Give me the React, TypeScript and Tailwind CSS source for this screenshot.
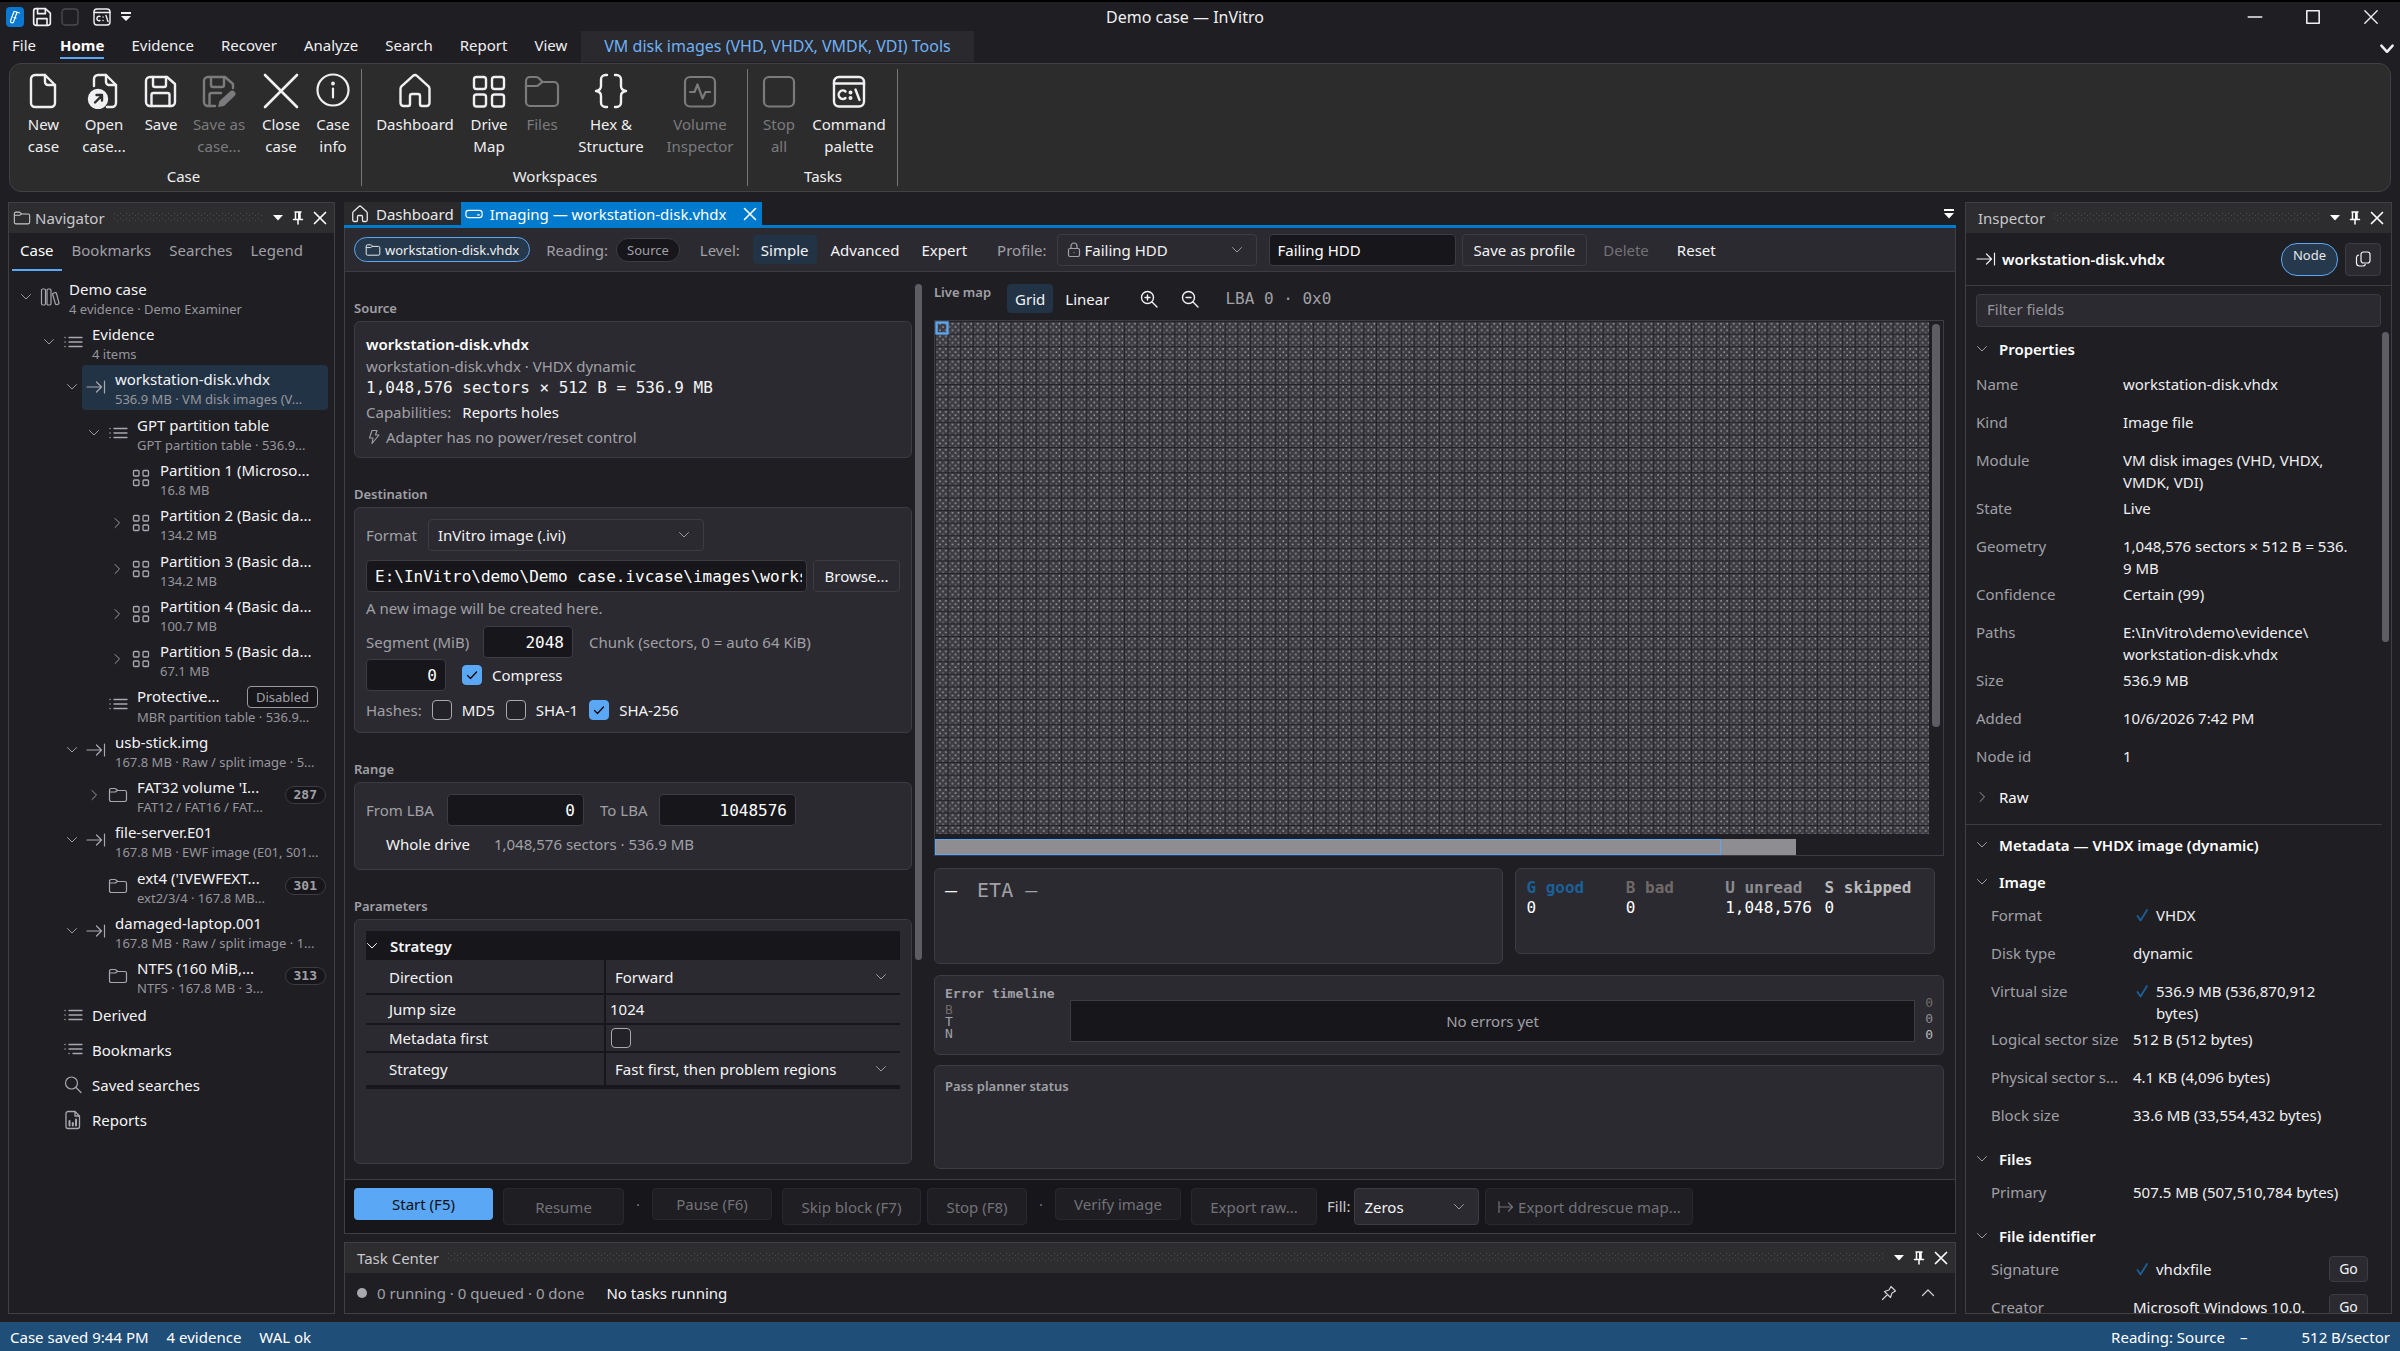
import { useState } from 'react';
import type { ReactNode } from 'react';
import clsx from 'clsx';

const MONO = "font-['DejaVu_Sans_Mono',monospace]";

type SvgProps = { children: ReactNode; box?: number; width?: number; className?: string };

function Svg({ children, box = 20, width = 1.3, className = 'h-5 w-5' }: SvgProps) {
  return (
    <svg
      viewBox={`0 0 ${box} ${box}`}
      fill="none"
      stroke="currentColor"
      strokeWidth={width}
      strokeLinecap="round"
      strokeLinejoin="round"
      className={clsx('shrink-0', className)}
      aria-hidden="true"
    >
      {children}
    </svg>
  );
}

const big = 'h-9 w-9';

const homePath =
  'M16 2.800a3 3 0 0 1 4 0l11 10a4 4 0 0 1 1.500 3V30a3 3 0 0 1-3 3H25a2 2 0 0 1-2-2v-8a2 2 0 0 0-2-2h-6a2 2 0 0 0-2 2v8a2 2 0 0 1-2 2H6.500a3 3 0 0 1-3-3V15.800a4 4 0 0 1 1.500-3z';

const ribbonIcons: Record<string, ReactNode> = {
  new: (
    <Svg box={36} width={2.4} className={big}>
      <path d="M9 2h10l10 10v18a4 4 0 0 1-4 4H9a4 4 0 0 1-4-4V6a4 4 0 0 1 4-4z" />
      <path d="M19 2v7a3 3 0 0 0 3 3h7" />
    </Svg>
  ),
  open: (
    <Svg box={36} width={2.4} className={big}>
      <path d="M8 13V6a4 4 0 0 1 4-4h8l10 10v18a4 4 0 0 1-4 4h-5" />
      <path d="M20 2v7a3 3 0 0 0 3 3h7" />
      <circle cx="12" cy="26" r="9" fill="currentColor" />
      <path d="M9 29.500l7-7M10.500 22H16v5.500" stroke="#2c2c2c" />
    </Svg>
  ),
  save: (
    <Svg box={36} width={2.4} className={big}>
      <path d="M7 4h17l8 7v18a4 4 0 0 1-4 4H7a4 4 0 0 1-4-4V8a4 4 0 0 1 4-4z" />
      <path d="M10 4v8a2 2 0 0 0 2 2h9a2 2 0 0 0 2-2V4M8.500 33V22a2 2 0 0 1 2-2h14a2 2 0 0 1 2 2v11" />
    </Svg>
  ),
  saveAs: (
    <Svg box={36} width={2.4} className={big}>
      <path d="M14 33H7a4 4 0 0 1-4-4V8a4 4 0 0 1 4-4h17l8 7v4" />
      <path d="M10 4v8a2 2 0 0 0 2 2h9a2 2 0 0 0 2-2V4M8.500 33V22a2 2 0 0 1 2-2H20" />
      <path d="M17 34l1.500-6L29 18.500a3 3 0 0 1 4.500 4.500L23 33z" fill="currentColor" stroke="none" />
    </Svg>
  ),
  close: (
    <Svg box={36} width={2.6} className={big}>
      <path d="M2 2l32 32M34 2L2 34" />
    </Svg>
  ),
  info: (
    <Svg box={36} width={2.2} className={big}>
      <circle cx="18" cy="17" r="15.500" />
      <path d="M18 15.500v9" />
      <circle cx="18" cy="10.500" r=".8" fill="currentColor" />
    </Svg>
  ),
  home: (
    <Svg box={36} width={2.4} className={big}>
      <path d={homePath} />
    </Svg>
  ),
  grid: (
    <Svg box={36} width={2.4} className={big}>
      <rect x="3" y="4" width="12" height="12" rx="2.500" />
      <rect x="21" y="4" width="12" height="12" rx="2.500" />
      <rect x="3" y="21.500" width="12" height="12" rx="2.500" />
      <rect x="21" y="21.500" width="12" height="12" rx="2.500" />
    </Svg>
  ),
  files: (
    <Svg box={36} width={2.2} className={big}>
      <path d="M2 13V8a4 4 0 0 1 4-4h6a4 4 0 0 1 3 1.300L18.500 9H30a4 4 0 0 1 4 4v16a4 4 0 0 1-4 4H6a4 4 0 0 1-4-4V13h10a4 4 0 0 0 3-1.300L18.500 9" />
    </Svg>
  ),
  hex: (
    <Svg box={36} width={2.4} className={big}>
      <path d="M14 2h-1.500A4.500 4.500 0 0 0 8 6.500V13c0 3-1.500 4.500-5 5 3.500.5 5 2 5 5v6.500a4.500 4.500 0 0 0 4.500 4.500H14M22 2h1.500A4.500 4.500 0 0 1 28 6.500V13c0 3 1.500 4.500 5 5-3.500.5-5 2-5 5v6.500a4.500 4.500 0 0 1-4.500 4.500H22" />
    </Svg>
  ),
  volume: (
    <Svg box={36} width={2.2} className={big}>
      <rect x="3" y="4" width="30" height="29.500" rx="5" />
      <path d="M8 19h4.500l3-7.500 5 14 3-6.500H28" />
    </Svg>
  ),
  stop: (
    <Svg box={36} width={2.2} className={big}>
      <rect x="3" y="4" width="30" height="29.500" rx="5" />
    </Svg>
  ),
  command: (
    <Svg box={36} width={2.4} className={big}>
      <rect x="3" y="4" width="30" height="29.500" rx="5" />
      <path d="M3 10.500h30" />
      <path d="M14.500 18.500a4.200 4.200 0 1 0 0 6.500M24.500 16.500l4 10.500" />
      <circle cx="19.500" cy="19.500" r=".8" fill="currentColor" />
      <circle cx="19.500" cy="25" r=".8" fill="currentColor" />
    </Svg>
  ),
};

const ChevronDown = ({ className = 'h-3 w-3' }: { className?: string }) => (
  <Svg box={12} width={1} className={className}>
    <path d="M1.500 3.500L6 8l4.500-4.500" />
  </Svg>
);
const ChevronRight = () => (
  <Svg box={12} width={1} className="h-3 w-3">
    <path d="M4 1.500L8.500 6 4 10.500" />
  </Svg>
);
const FolderIcon = ({ className = 'h-5 w-5' }: { className?: string }) => (
  <Svg width={1.2} className={className}>
    <path d="M1.500 7V5.200a1.700 1.700 0 0 1 1.700-1.700h3.600c.5 0 .9.200 1.200.5L9.800 5.500h7a1.700 1.700 0 0 1 1.700 1.700v7.600a1.700 1.700 0 0 1-1.700 1.700H3.200a1.700 1.700 0 0 1-1.700-1.700V7h5.300c.5 0 .9-.2 1.200-.5l1.300-1" />
  </Svg>
);
const ArrowBarIcon = () => (
  <Svg width={1.2}>
    <path d="M1 10h14.500M10.500 5l5 5-5 5M18.500 4v12" />
  </Svg>
);
const ListIcon = () => (
  <Svg>
    <path d="M6 5.500h13M6 10h13M6 14.500h13M2 5.500h.1M2 10h.1M2 14.500h.1" />
  </Svg>
);
const BulletListIcon = () => (
  <Svg>
    <path d="M6 4.500h13M6 9h13M10 13.500h9M2 4.500h.1M2 9h.1M6 13.500h.1" />
  </Svg>
);
const TilesIcon = () => (
  <Svg>
    <rect x="2.500" y="2.500" width="5.500" height="5.500" rx="1" />
    <rect x="12" y="2.500" width="5.500" height="5.500" rx="1" />
    <rect x="2.500" y="12" width="5.500" height="5.500" rx="1" />
    <rect x="12" y="12" width="5.500" height="5.500" rx="1" />
  </Svg>
);
const BooksIcon = () => (
  <Svg width={1.2}>
    <rect x="1.500" y="2" width="4" height="16" rx="1.200" />
    <rect x="7" y="2" width="4" height="16" rx="1.200" />
    <path d="M13.200 6.200l2-.6c.6-.2 1 .1 1.200.6l2.500 9.600c.2.600-.1 1.100-.7 1.300l-1.500.4c-.6.200-1.100-.1-1.300-.7l-2.700-9.300c-.2-.600 0-1.100.500-1.300z" />
  </Svg>
);
const SearchIcon = () => (
  <Svg width={1.2}>
    <circle cx="8.500" cy="8" r="6" />
    <path d="M13 12.500l5 5" />
  </Svg>
);
const ReportIcon = () => (
  <Svg>
    <path d="M5 1.500h7l4.500 4.500v10.500a2 2 0 0 1-2 2H5a2 2 0 0 1-2-2v-13a2 2 0 0 1 2-2zM12 1.500V6h4.500" />
    <path d="M6.500 11v4.500M9.800 13v2.500M13 9.500v6" strokeWidth="2" />
  </Svg>
);

function HeaderTools({ label }: { label: string }) {
  return (
    <div className="-mr-0.5 flex items-center gap-1.5 text-white">
      <button type="button" aria-label={`${label} menu`}>
        <svg viewBox="0 0 12 12" className="h-3 w-3" aria-hidden="true">
          <path d="M1 3h10L6 8.500z" fill="currentColor" />
        </svg>
      </button>
      <button type="button" aria-label={`Pin ${label}`}>
        <Svg box={16} width={1.5} className="h-4 w-4">
          <path d="M5 2h6M5.500 2v7M10 2v7M8.800 2v7M3.500 9.500h9M8 9.500V14" />
        </Svg>
      </button>
      <button type="button" aria-label={`Close ${label}`}>
        <Svg box={16} width={1.7} className="h-4 w-4">
          <path d="M2.500 2.500l11 11M13.500 2.500l-11 11" />
        </Svg>
      </button>
    </div>
  );
}

function PanelHeader({ title, icon }: { title: string; icon?: ReactNode }) {
  return (
    <header className="flex h-[30px] shrink-0 items-center bg-[#2d2d2f] px-2 text-[#c8c8cc]">
      {icon}
      <h2 className="ml-1">{title}</h2>
      <svg className="mx-2 h-[10px] min-w-0 flex-1" aria-hidden="true">
        <defs>
          <pattern id={`grip-${title.replace(' ', '')}`} width="6" height="5" patternUnits="userSpaceOnUse">
            <rect width="1" height="1" x="1" fill="#4c4c50" />
            <rect width="1" height="1" x="4" y="2" fill="#4c4c50" />
          </pattern>
        </defs>
        <rect width="100%" height="100%" fill={`url(#grip-${title.replace(' ', '')})`} />
      </svg>
      <HeaderTools label={title} />
    </header>
  );
}

type RibbonItem = { icon: string; label: string[]; width: string; disabled?: boolean };
const ribbonGroups: { name: string; pad: string; items: RibbonItem[] }[] = [
  {
    name: 'Case',
    pad: 'pl-[5px] pr-[5px]',
    items: [
      { icon: 'new', label: ['New', 'case'], width: 'w-[57px]' },
      { icon: 'open', label: ['Open', 'case...'], width: 'w-[64px]' },
      { icon: 'save', label: ['Save'], width: 'w-[50px]' },
      { icon: 'saveAs', label: ['Save as', 'case...'], width: 'w-[66px]', disabled: true },
      { icon: 'close', label: ['Close', 'case'], width: 'w-[58px]' },
      { icon: 'info', label: ['Case', 'info'], width: 'w-[46px]' },
    ],
  },
  {
    name: 'Workspaces',
    pad: 'pl-[9px] pr-1',
    items: [
      { icon: 'home', label: ['Dashboard'], width: 'w-[88px]' },
      { icon: 'grid', label: ['Drive', 'Map'], width: 'w-[60px]' },
      { icon: 'files', label: ['Files'], width: 'w-[46px]', disabled: true },
      { icon: 'hex', label: ['Hex &', 'Structure'], width: 'w-[92px]' },
      { icon: 'volume', label: ['Volume', 'Inspector'], width: 'w-[86px]', disabled: true },
    ],
  },
  {
    name: 'Tasks',
    pad: 'pl-[7px] pr-[2px]',
    items: [
      { icon: 'stop', label: ['Stop', 'all'], width: 'w-[48px]', disabled: true },
      { icon: 'command', label: ['Command', 'palette'], width: 'w-[92px]' },
    ],
  },
];

const menuTabs = ['File', 'Home', 'Evidence', 'Recover', 'Analyze', 'Search', 'Report', 'View'];

function TitleBar() {
  return (
    <div className="grid h-[31px] grid-cols-[1fr_auto_1fr] items-center border-t-2 border-black pl-1.5">
      <div className="flex items-center gap-2">
        <span className="flex h-5 w-[18px] items-center justify-center rounded bg-[#0a78d0] text-white">
          <Svg box={16} width={1.2} className="h-4 w-4">
            <path d="M8 2.500l4.500 1.500M10 3.300L6.500 13a1.600 1.600 0 0 1-3-1L7 2.500M7 8.500l2 .5" />
          </Svg>
        </span>
        <button type="button" aria-label="Save">
          <Svg box={36} width={3} className="h-5 w-5">
            <path d="M7 3h17l9 8v18a4 4 0 0 1-4 4H7a4 4 0 0 1-4-4V7a4 4 0 0 1 4-4z" />
            <path d="M10 3v9h14V3M9 33V21h18v12" />
          </Svg>
        </button>
        <button type="button" aria-label="Stop all" disabled className="text-[#4c4c50]">
          <Svg className="h-5 w-5">
            <rect x="2" y="2" width="16" height="16" rx="3" />
          </Svg>
        </button>
        <button type="button" aria-label="Command palette" className="ml-1">
          <Svg width={1.4}>
            <rect x="2" y="2" width="16" height="16" rx="3" />
            <path d="M2 5.500h16M8 9.500a2.200 2.200 0 1 0 0 4M14 8.500l2 6M11 10h.1M11 13.500h.1" />
          </Svg>
        </button>
        <button type="button" aria-label="Customize toolbar">
          <svg viewBox="0 0 12 12" className="h-3 w-3" aria-hidden="true">
            <path d="M1 1h10v2H1zM1 5h10L6 10z" fill="currentColor" />
          </svg>
        </button>
      </div>
      <h1 className="pr-9 text-base leading-5">Demo case — InVitro</h1>
      <div className="flex justify-end gap-10 pr-5">
        <button type="button" aria-label="Minimize">
          <Svg box={16} width={1.4} className="h-[18px] w-[18px]">
            <path d="M2 8h12" />
          </Svg>
        </button>
        <button type="button" aria-label="Maximize">
          <Svg box={16} width={1.4} className="h-[18px] w-[18px]">
            <path d="M2.500 2.500h11v11h-11z" />
          </Svg>
        </button>
        <button type="button" aria-label="Close">
          <Svg box={16} width={1.2} className="h-[18px] w-[18px]">
            <path d="M2.500 2.500l11 11M13.500 2.500l-11 11" />
          </Svg>
        </button>
      </div>
    </div>
  );
}

function Ribbon() {
  return (
    <>
      <nav className="flex h-[31px] items-stretch gap-px pl-0.5">
        {menuTabs.map((tab) => (
          <a
            key={tab}
            href={`#${tab.toLowerCase()}`}
            className={clsx('flex items-center', tab === 'File' ? 'px-2.5' : 'px-[13px]')}
          >
            <span
              className={clsx(
                'border-b-2 pt-px pb-0.5',
                tab === 'Home' ? 'border-[#5aa7f5] font-bold text-white' : 'border-transparent',
              )}
            >
              {tab}
            </span>
          </a>
        ))}
        <a
          href="#tools"
          className="flex items-center bg-[#29292e] px-[23px] pb-0.5 text-base leading-5 text-[#6fb1f5]"
        >
          VM disk images (VHD, VHDX, VMDK, VDI) Tools
        </a>
        <button type="button" aria-label="Collapse ribbon" className="ml-auto pt-1 pr-1">
          <Svg box={16} width={2.2} className="h-[18px] w-[18px]">
            <path d="M3 5l5 5.500L13 5" />
          </Svg>
        </button>
      </nav>
      <section className="mx-[9px] mt-px flex h-[129px] rounded-xl border border-[#414145] bg-[#2c2c2c] py-[5px]">
        {ribbonGroups.map((group) => (
          <div key={group.name} className={clsx('flex flex-col border-r border-[#77777a]', group.pad)}>
            <div className="flex flex-1 pt-1">
              {group.items.map((item) => (
                <button
                  key={item.icon}
                  type="button"
                  disabled={item.disabled}
                  className={clsx('flex flex-col items-center', item.width, item.disabled && 'text-[#7b7b7e]')}
                >
                  {ribbonIcons[item.icon]}
                  <span className="mt-1 leading-[22px] whitespace-nowrap">
                    {item.label.map((line) => (
                      <span key={line} className="block">
                        {line}
                      </span>
                    ))}
                  </span>
                </button>
              ))}
            </div>
            <div className="pr-1 pb-px text-center leading-[18px]">{group.name}</div>
          </div>
        ))}
      </section>
    </>
  );
}

type TreeNode = {
  level: number;
  icon: ReactNode;
  title: string;
  sub: string;
  open?: boolean;
  closed?: boolean;
  selected?: boolean;
  count?: string;
  tag?: string;
};

const tree: TreeNode[] = [
  { level: 0, icon: <BooksIcon />, title: 'Demo case', sub: '4 evidence · Demo Examiner', open: true },
  { level: 1, icon: <ListIcon />, title: 'Evidence', sub: '4 items', open: true },
  {
    level: 2,
    icon: <ArrowBarIcon />,
    title: 'workstation-disk.vhdx',
    sub: '536.9 MB · VM disk images (V...',
    open: true,
    selected: true,
  },
  { level: 3, icon: <ListIcon />, title: 'GPT partition table', sub: 'GPT partition table · 536.9...', open: true },
  { level: 4, icon: <TilesIcon />, title: 'Partition 1 (Microso...', sub: '16.8 MB' },
  { level: 4, icon: <TilesIcon />, title: 'Partition 2 (Basic da...', sub: '134.2 MB', closed: true },
  { level: 4, icon: <TilesIcon />, title: 'Partition 3 (Basic da...', sub: '134.2 MB', closed: true },
  { level: 4, icon: <TilesIcon />, title: 'Partition 4 (Basic da...', sub: '100.7 MB', closed: true },
  { level: 4, icon: <TilesIcon />, title: 'Partition 5 (Basic da...', sub: '67.1 MB', closed: true },
  { level: 3, icon: <ListIcon />, title: 'Protective...', sub: 'MBR partition table · 536.9...', tag: 'Disabled' },
  { level: 2, icon: <ArrowBarIcon />, title: 'usb-stick.img', sub: '167.8 MB · Raw / split image · 5...', open: true },
  { level: 3, icon: <FolderIcon />, title: "FAT32 volume 'I...", sub: 'FAT12 / FAT16 / FAT...', closed: true, count: '287' },
  { level: 2, icon: <ArrowBarIcon />, title: 'file-server.E01', sub: '167.8 MB · EWF image (E01, S01...', open: true },
  { level: 3, icon: <FolderIcon />, title: "ext4 ('IVEWFEXT...", sub: 'ext2/3/4 · 167.8 MB...', count: '301' },
  { level: 2, icon: <ArrowBarIcon />, title: 'damaged-laptop.001', sub: '167.8 MB · Raw / split image · 1...', open: true },
  { level: 3, icon: <FolderIcon />, title: 'NTFS (160 MiB,...', sub: 'NTFS · 167.8 MB · 3...', count: '313' },
];

const leaves = [
  { icon: <ListIcon />, title: 'Derived' },
  { icon: <BulletListIcon />, title: 'Bookmarks' },
  { icon: <SearchIcon />, title: 'Saved searches' },
  { icon: <ReportIcon />, title: 'Reports' },
];

const indents = ['pl-1.5', 'pl-[29px]', 'pl-[52px]', 'pl-[74px]', 'pl-[97px]'];

function Navigator() {
  return (
    <aside className="flex w-[327px] shrink-0 flex-col overflow-hidden border border-[#3f3f44]">
      <PanelHeader title="Navigator" icon={<FolderIcon className="-ml-1 h-[18px] w-[18px]" />} />
      <div className="flex gap-0.5 pt-1 pl-[3px] text-[#a0a0a6]">
        {['Case', 'Bookmarks', 'Searches', 'Legend'].map((tab, i) => (
          <button
            key={tab}
            type="button"
            className={clsx(
              'border-b-2 px-2 pb-1.5 leading-[26px]',
              i === 0 ? 'border-[#5aa7f5] text-white' : 'border-transparent',
            )}
          >
            {tab}
          </button>
        ))}
      </div>
      <ul className="mt-[3px] grid h-[725px] shrink-0 auto-rows-fr pr-1.5">
        {tree.map((node) => (
          <li key={node.title} className={clsx('flex min-w-0 items-center', indents[node.level])}>
            <span className="flex w-[21px] shrink-0 justify-center text-[#9a9aa0]">
              {node.open && <ChevronDown />}
              {node.closed && <ChevronRight />}
            </span>
            <div
              className={clsx(
                'flex h-full min-w-0 flex-1 items-center rounded',
                node.selected && 'bg-[#233346]',
              )}
            >
              <span className="ml-1 text-[#a8a8ae]">{node.icon}</span>
              <div className="ml-[9px] min-w-0 flex-1 pt-[3px] whitespace-nowrap">
                <div className="flex items-center justify-between pr-2.5 leading-[21px] text-[#f4f4f6]">
                  {node.title}
                  {node.tag && (
                    <span className="rounded border border-[#9a9a9f] bg-[#17161b] px-2 text-[13px] leading-5 text-[#a0a0a6]">
                      {node.tag}
                    </span>
                  )}
                </div>
                <div className="text-[13px] leading-[18px] text-[#96969c]">{node.sub}</div>
              </div>
              {node.count && (
                <span
                  className={clsx(
                    'mr-0.5 rounded-full border border-[#3d3c42] bg-[#17161b] px-2 text-[13px] leading-4 font-bold text-[#a0a0a6]',
                    MONO,
                  )}
                >
                  {node.count}
                </span>
              )}
            </div>
          </li>
        ))}
      </ul>
      <ul className="-mt-0.5">
        {leaves.map((leaf) => (
          <li key={leaf.title} className="flex h-[35px] items-center pl-[54px] text-[#f4f4f6]">
            <span className="text-[#a8a8ae]">{leaf.icon}</span>
            <span className="ml-[9px]">{leaf.title}</span>
          </li>
        ))}
      </ul>
    </aside>
  );
}

function Select({
  id,
  options,
  className,
  label,
  icon,
}: {
  id: string;
  options: string[];
  className?: string;
  label?: string;
  icon?: ReactNode;
}) {
  return (
    <span className={clsx('grid items-center', className)}>
      <select
        id={id}
        aria-label={label}
        className={clsx(
          'col-start-1 row-start-1 h-full w-full appearance-none bg-transparent text-[#f4f4f6] outline-none',
          icon ? 'pl-[27px]' : 'pl-[9px]',
        )}
      >
        {options.map((option) => (
          <option key={option}>{option}</option>
        ))}
      </select>
      {icon && <span className="pointer-events-none col-start-1 row-start-1 ml-2">{icon}</span>}
      <span className="pointer-events-none col-start-1 row-start-1 mr-[13px] justify-self-end text-[#9a9aa0]">
        <ChevronDown />
      </span>
    </span>
  );
}

function Check({ label, defaultChecked, hideLabel }: { label: string; defaultChecked?: boolean; hideLabel?: boolean }) {
  return (
    <label className="flex items-center gap-2.5">
      <span className="grid h-5 w-5 place-items-center">
        <input
          type="checkbox"
          defaultChecked={defaultChecked}
          aria-label={label}
          className="peer col-start-1 row-start-1 h-5 w-5 appearance-none rounded border border-[#a8a8ae] bg-[#232228] checked:border-[#5aa7f5] checked:bg-[#5aa7f5]"
        />
        <Svg box={16} width={1.2} className="invisible col-start-1 row-start-1 h-4 w-4 text-black peer-checked:visible">
          <path d="M3.500 8.500l3 3L12.500 5" />
        </Svg>
      </span>
      {!hideLabel && label}
    </label>
  );
}

const field = 'rounded border border-[#3d3c42] bg-[#17161b] text-white outline-none';
const button = 'rounded border border-[#3d3c42] bg-[#2b2a30] text-[#f4f4f6]';
const card = 'rounded-md border border-[#3d3c42] bg-[#2b2a30]';

function EditorToolbar() {
  const [level, setLevel] = useState('Simple');
  return (
    <div className="flex h-11 shrink-0 items-center border-b border-[#3d3c42] bg-[#2b2a30] pl-[9px] text-[#a0a0a6]">
      <button
        type="button"
        className="flex h-[25px] items-center gap-1 rounded-full border border-[#5aa7f5] bg-[#26384b] px-2.5 text-[13px] text-[#f0f0f2]"
      >
        <FolderIcon className="h-4 w-4" />
        workstation-disk.vhdx
      </button>
      <span className="ml-4">Reading:</span>
      <span className="ml-2 rounded-full border border-[#3d3c42] bg-[#17161b] px-2.5 text-[13px] leading-[22px]">
        Source
      </span>
      <span className="ml-5">Level:</span>
      <div className="ml-[13px] flex gap-1.5">
        {['Simple', 'Advanced', 'Expert'].map((name) => (
          <button
            key={name}
            type="button"
            onClick={() => setLevel(name)}
            className={clsx('h-[29px] rounded px-2 text-[#f4f4f6]', level === name && 'bg-[#233346]')}
          >
            {name}
          </button>
        ))}
      </div>
      <label htmlFor="profile" className="ml-[22px]">
        Profile:
      </label>
      <Select
        id="profile"
        options={['Failing HDD']}
        className="ml-2.5 h-8 w-[200px] rounded border border-[#3d3c42]"
        icon={
          <Svg box={16} width={1.2} className="h-4 w-4">
            <rect x="2.500" y="6.500" width="11" height="8" rx="1.500" />
            <path d="M5 6.500V4a3 3 0 0 1 6 0v2.500M8 10.500h.1" />
          </Svg>
        }
      />
      <input aria-label="Profile name" defaultValue="Failing HDD" className={clsx('ml-3 h-8 w-[187px] px-2', field)} />
      <button type="button" className={clsx('ml-1.5 h-8 px-[11px]', button)}>
        Save as profile
      </button>
      <button type="button" disabled className="ml-4 text-[#727277]">
        Delete
      </button>
      <button type="button" className="ml-7 text-[#f4f4f6]">
        Reset
      </button>
    </div>
  );
}

function Section({ title, children, className }: { title: string; children: ReactNode; className?: string }) {
  return (
    <section className="mt-[26px]">
      <h3 className="mb-[3px] text-[13px] leading-5 font-semibold text-[#a0a0a6]">{title}</h3>
      <div className={clsx('px-[11px] pt-[11px]', card, className)}>{children}</div>
    </section>
  );
}

function Settings() {
  const row = 'border-b-2 border-[#17161b]';
  const head = 'border-r-2 border-[#17161b] pl-[23px] text-left font-normal';
  return (
    <div className="w-[558px] shrink-0 text-[#a0a0a6]">
      <Section title="Source" className="pb-2">
        <div className="leading-[22px] font-semibold text-white">workstation-disk.vhdx</div>
        <div className="leading-[22px]">workstation-disk.vhdx · VHDX dynamic</div>
        <div className={clsx('text-base leading-[22px] text-[#f4f4f6]', MONO)}>1,048,576 sectors × 512 B = 536.9 MB</div>
        <div className="flex h-[25px] items-center gap-[11px]">
          Capabilities: <span className="text-[#f4f4f6]">Reports holes</span>
        </div>
        <div className="flex h-[25px] items-center gap-1">
          <Svg box={16} width={1.1} className="h-4 w-4">
            <path d="M6 1.500h5L9.500 6H13l-7 8.500L7 9H3.500z" />
          </Svg>
          Adapter has no power/reset control
        </div>
      </Section>

      <Section title="Destination" className="pb-[11px]">
        <div className="flex h-8 items-center">
          <label htmlFor="format" className="w-[62px]">
            Format
          </label>
          <Select
            id="format"
            options={['InVitro image (.ivi)']}
            className="h-8 w-[276px] rounded border border-[#3d3c42]"
          />
        </div>
        <div className="mt-[9px] flex gap-1.5">
          <input
            aria-label="Destination path"
            defaultValue="E:\InVitro\demo\Demo case.ivcase\images\workstation-disk.ivi"
            className={clsx('h-8 min-w-0 flex-1 pr-1 pl-2 text-base', field, MONO)}
          />
          <button type="button" className={clsx('h-8 w-[87px]', button)}>
            Browse...
          </button>
        </div>
        <div className="mt-1 leading-6">A new image will be created here.</div>
        <div className="mt-1.5 flex items-center">
          <label htmlFor="segment" className="w-[117px]">
            Segment (MiB)
          </label>
          <input
            id="segment"
            defaultValue="2048"
            className={clsx('h-8 w-[90px] px-2 text-right text-base', field, MONO)}
          />
          <label htmlFor="chunk" className="ml-4">
            Chunk (sectors, 0 = auto 64 KiB)
          </label>
        </div>
        <div className="mt-px flex items-center text-[#f4f4f6]">
          <input
            id="chunk"
            defaultValue="0"
            className={clsx('mr-4 h-8 w-20 px-2 text-right text-base', field, MONO)}
          />
          <Check label="Compress" defaultChecked />
        </div>
        <div className="mt-2 flex h-[22px] items-center text-[#f4f4f6]">
          <span className="mr-2.5 text-[#a0a0a6]">Hashes:</span>
          <div className="flex gap-[11px]">
            <Check label="MD5" />
            <Check label="SHA-1" />
            <Check label="SHA-256" defaultChecked />
          </div>
        </div>
      </Section>

      <Section title="Range" className="pb-[13px]">
        <div className="flex items-center">
          <label htmlFor="from" className="w-[81px]">
            From LBA
          </label>
          <input
            id="from"
            defaultValue="0"
            className={clsx('h-8 w-[137px] px-2 text-right text-base', field, MONO)}
          />
          <label htmlFor="to" className="ml-4 w-[59px]">
            To LBA
          </label>
          <input
            id="to"
            defaultValue="1048576"
            className={clsx('h-8 w-[137px] px-2 text-right text-base', field, MONO)}
          />
        </div>
        <div className="mt-1.5 flex pl-5 leading-6">
          <button type="button" className="mr-6 text-[#f4f4f6]">
            Whole drive
          </button>
          1,048,576 sectors · 536.9 MB
        </div>
      </Section>

      <Section title="Parameters" className="h-[245px]">
        <table className="w-full table-fixed border-b border-[#45444a] text-[#f4f4f6]">
          <colgroup>
            <col className="w-[239px]" />
            <col />
          </colgroup>
          <thead>
            <tr className="h-[29px] bg-[#17161b]">
              <th colSpan={2} className="text-left font-semibold">
                <span className="flex items-center gap-3">
                  <ChevronDown />
                  Strategy
                </span>
              </th>
            </tr>
          </thead>
          <tbody>
            <tr className={clsx('h-[34px]', row)}>
              <th className={head}>Direction</th>
              <td>
                <Select id="direction" label="Direction" options={['Forward']} className="h-8" />
              </td>
            </tr>
            <tr className={clsx('h-[30px]', row)}>
              <th className={head}>Jump size</th>
              <td className="pl-1">
                <input aria-label="Jump size" defaultValue="1024" className="w-full bg-transparent outline-none" />
              </td>
            </tr>
            <tr className={clsx('h-[28px]', row)}>
              <th className={head}>Metadata first</th>
              <td className="pl-[5px]">
                <Check label="Metadata first" hideLabel />
              </td>
            </tr>
            <tr className="h-[34px] border-b-4 border-[#17161b]">
              <th className={head}>Strategy</th>
              <td>
                <Select id="strategy" label="Strategy" options={['Fast first, then problem regions']} className="h-8" />
              </td>
            </tr>
          </tbody>
        </table>
      </Section>
    </div>
  );
}

function SectorMap() {
  return (
    <svg className="h-full w-full" aria-label="Sector map">
      <defs>
        <pattern id="cell" width="12.6" height="12.6" patternUnits="userSpaceOnUse">
          <rect width="12.6" height="12.6" fill="#222126" />
          <rect x=".9" y=".9" width="11.7" height="11.7" fill="#3d3c42" />
          <g fill="#a8a8ac">
            <rect x="4.200" y="2" width="1.500" height="1.500" />
            <rect x="10.200" y="2" width="1.500" height="1.500" />
            <rect x="1.500" y="5.200" width="1.200" height="1.200" />
            <rect x="7.300" y="5.200" width="1.500" height="1.500" />
            <rect x="4.200" y="8.400" width="1.500" height="1.500" />
            <rect x="10.200" y="8.400" width="1.500" height="1.500" />
            <rect x="1.500" y="11.300" width="1.200" height=".8" />
            <rect x="7.300" y="11.300" width="1.500" height=".8" />
          </g>
        </pattern>
      </defs>
      <rect width="100%" height="100%" fill="url(#cell)" />
      <rect x="1.500" y="1.500" width="11" height="11" fill="none" stroke="#5aa7f5" strokeWidth="2.400" />
    </svg>
  );
}

const stats = [
  { name: 'G good', value: '0', color: 'text-[#1b6099]' },
  { name: 'B bad', value: '0', color: 'text-[#6f6967]' },
  { name: 'U unread', value: '1,048,576', color: 'text-[#8c8c90]' },
  { name: 'S skipped', value: '0', color: 'text-[#b8b8bb]' },
];

function LiveMap() {
  return (
    <div className="mt-3 mr-[11px] mb-2.5 ml-3 flex min-w-0 flex-1 flex-col">
      <div className="flex h-9 items-start">
        <h3 className="text-[13px] leading-[17px] font-semibold text-[#a0a0a6]">Live map</h3>
        <div className="ml-4 flex h-[29px] items-center text-[#f4f4f6]">
          <button type="button" className="h-full rounded bg-[#233346] px-2">
            Grid
          </button>
          <button type="button" className="ml-3">
            Linear
          </button>
          <button type="button" aria-label="Zoom in" className="ml-[30px]">
            <Svg width={1.4}>
              <circle cx="8.500" cy="8.500" r="6" />
              <path d="M13 13l5 5M8.500 6v5M6 8.500h5" />
            </Svg>
          </button>
          <button type="button" aria-label="Zoom out" className="ml-[21px]">
            <Svg width={1.4}>
              <circle cx="8.500" cy="8.500" r="6" />
              <path d="M13 13l5 5M6 8.500h5" />
            </Svg>
          </button>
          <span className={clsx('ml-[25px] text-base text-[#a0a0a6]', MONO)}>LBA 0 · 0x0</span>
        </div>
      </div>

      <div className="flex min-h-0 flex-1 flex-col border border-[#3d3c42]">
        <div className="flex min-h-0 flex-1">
          <div className="min-w-0 flex-1">
            <SectorMap />
          </div>
          <div className="w-[14px] shrink-0 px-[3px] pt-[3px]">
            <div className="h-[79%] rounded-full bg-[#5e5d63]" />
          </div>
        </div>
        <div className="mt-[5px] flex h-4">
          <div className="w-[78%] border border-[#5aa7f5] bg-[#8d8d92]" />
          <div className="w-[7.4%] bg-[#8d8d92]" />
        </div>
      </div>

      <div className="mt-3 grid grid-cols-[57fr_42fr] items-start gap-3 pr-[9px]">
        <div className={clsx('h-24 pt-2 pl-2.5 text-xl leading-[26px]', card, MONO)}>
          <span className="text-[#f4f4f6]">–</span>
          <span className="ml-5 text-[#a0a0a6]">ETA –</span>
        </div>
        <div className={clsx('grid h-[86px] grid-cols-4 pt-[9px] pr-2.5 pl-2.5 text-base leading-5', card, MONO)}>
          {stats.map((stat) => (
            <div key={stat.name} className="whitespace-nowrap">
              <div className={clsx('font-bold', stat.color)}>{stat.name}</div>
              <div className="text-white">{stat.value}</div>
            </div>
          ))}
        </div>
      </div>

      <div className={clsx('mt-[11px] flex h-20 pr-2.5 pl-2.5', card)}>
        <div className={clsx('w-[125px] pt-2.5 text-[13px] leading-3 text-[#a0a0a6]', MONO)}>
          <h3 className="mb-0.5 leading-4 font-bold">Error timeline</h3>
          <div className="text-[#6f6967]">B</div>
          <div>T</div>
          <div>N</div>
        </div>
        <div className="mt-6 mb-3 flex flex-1 items-center justify-center border border-[#3d3c42] bg-[#17161b] text-[#a0a0a6]">
          No errors yet
        </div>
        <div className={clsx('ml-2.5 pt-[19px] text-[13px] leading-4 text-[#8c8c90]', MONO)}>
          <div className="text-[#6f6967]">0</div>
          <div>0</div>
          <div className="text-[#b8b8bb]">0</div>
        </div>
      </div>

      <div className={clsx('mt-2.5 h-[104px] pt-2.5 pl-2.5', card)}>
        <h3 className="text-[13px] leading-5 font-semibold text-[#a0a0a6]">Pass planner status</h3>
      </div>
    </div>
  );
}

function ActionBar() {
  const off = 'rounded border border-[#29282e] bg-[#1f1e23] text-[#727277]';
  return (
    <div className="flex h-[54px] shrink-0 items-start border-t border-[#3d3c42] bg-[#17161b] pt-2 pl-[9px]">
      <button type="button" className="h-8 w-[139px] rounded bg-[#5aa7f5] text-[#101014]">
        Start (F5)
      </button>
      <button type="button" disabled className={clsx('ml-2.5 h-[37px] w-[121px]', off)}>
        Resume
      </button>
      <span className="w-7 text-center leading-8 text-[#727277]">·</span>
      <button type="button" disabled className={clsx('h-8 w-[120px]', off)}>
        Pause (F6)
      </button>
      <button type="button" disabled className={clsx('ml-2.5 h-[37px] w-[139px]', off)}>
        Skip block (F7)
      </button>
      <button type="button" disabled className={clsx('ml-1.5 h-[37px] w-[100px]', off)}>
        Stop (F8)
      </button>
      <span className="w-7 text-center leading-8 text-[#727277]">·</span>
      <button type="button" disabled className={clsx('h-8 w-[126px]', off)}>
        Verify image
      </button>
      <button type="button" disabled className={clsx('ml-2.5 h-[37px] w-[126px]', off)}>
        Export raw...
      </button>
      <label htmlFor="fill" className="mr-1 ml-2.5 leading-[37px] text-[#c8c8cc]">
        Fill:
      </label>
      <Select id="fill" options={['Zeros']} className={clsx('h-[37px] w-[125px]', button)} />
      <button
        type="button"
        disabled
        className={clsx('ml-1.5 flex h-[37px] w-[208px] items-center justify-center gap-1', off)}
      >
        <Svg box={16} width={1.2} className="h-4 w-4">
          <path d="M1 2.500v11M1 8h13.500M10.500 4l4 4-4 4" />
        </Svg>
        Export ddrescue map...
      </button>
    </div>
  );
}

function Editor() {
  return (
    <section className="flex min-h-0 flex-1 flex-col">
      <div className="flex h-[26px] shrink-0 items-stretch border-b-[3px] border-[#007acc]">
        <a href="#dashboard" className="flex items-center gap-[7px] bg-[#2a2a2c] px-[7px] text-[#e8e8ea]">
          <Svg box={36} width={2.6} className="h-[18px] w-[18px]">
            <path d={homePath} />
          </Svg>
          Dashboard
        </a>
        <div className="flex items-center bg-[#007acc] px-1 text-white">
          <Svg className="h-[18px] w-[18px]">
            <rect x="1" y="6" width="18" height="8" rx="3" />
            <path d="M14 11h2" />
          </Svg>
          <a href="#imaging" className="ml-[7px]">
            Imaging — workstation-disk.vhdx
          </a>
          <button type="button" aria-label="Close tab" className="ml-4">
            <Svg box={16} width={1.6} className="h-4 w-4">
              <path d="M2.500 2.500l11 11M13.500 2.500l-11 11" />
            </Svg>
          </button>
        </div>
        <button type="button" aria-label="Open documents" className="mr-px ml-auto text-white">
          <svg viewBox="0 0 12 12" className="h-3 w-3" aria-hidden="true">
            <path d="M1 1h10v2H1zM1 5h10L6 10.500z" fill="currentColor" />
          </svg>
        </button>
      </div>
      <div className="flex min-h-0 flex-1 flex-col border-x border-b border-[#3f3f44]">
        <EditorToolbar />
        <div className="flex min-h-0 flex-1 overflow-hidden pl-[9px]">
          <Settings />
          <div className="ml-[3px] w-[7px] shrink-0 pt-3">
            <div className="h-[676px] rounded-full bg-[#5e5d63]" />
          </div>
          <LiveMap />
        </div>
        <ActionBar />
      </div>
    </section>
  );
}

function TaskCenter() {
  return (
    <section className="mt-2 h-[72px] shrink-0 border border-[#3f3f44]">
      <PanelHeader title="Task Center" />
      <div className="flex h-10 items-center px-3">
        <span className="h-2.5 w-2.5 rounded-full bg-[#a8a8ae]" />
        <span className="ml-2.5 text-[#a0a0a6]">0 running · 0 queued · 0 done</span>
        <span className="ml-[22px] text-[#f4f4f6]">No tasks running</span>
        <div className="mr-[7px] ml-auto flex gap-[23px] text-[#d0d0d4]">
          <button type="button" aria-label="Pin tasks">
            <Svg box={16} width={1.2} className="h-4 w-4">
              <path d="M10 1.500L14.500 6l-3.500 2-1.500 4.500L3.500 6.500 8 5zM6.500 9.500L1.500 14.500" />
            </Svg>
          </button>
          <button type="button" aria-label="Expand tasks">
            <Svg box={16} width={1.2} className="h-4 w-4">
              <path d="M2.500 10.500L8 5l5.500 5.500" />
            </Svg>
          </button>
        </div>
      </div>
    </section>
  );
}

type Field = { name: string; value: string; verified?: boolean; go?: boolean };

const properties: Field[] = [
  { name: 'Name', value: 'workstation-disk.vhdx' },
  { name: 'Kind', value: 'Image file' },
  { name: 'Module', value: 'VM disk images (VHD, VHDX,\nVMDK, VDI)' },
  { name: 'State', value: 'Live' },
  { name: 'Geometry', value: '1,048,576 sectors × 512 B = 536.\n9 MB' },
  { name: 'Confidence', value: 'Certain (99)' },
  { name: 'Paths', value: 'E:\\InVitro\\demo\\evidence\\\nworkstation-disk.vhdx' },
  { name: 'Size', value: '536.9 MB' },
  { name: 'Added', value: '10/6/2026 7:42 PM' },
  { name: 'Node id', value: '1' },
];

const imageFields: Field[] = [
  { name: 'Format', value: 'VHDX', verified: true },
  { name: 'Disk type', value: 'dynamic' },
  { name: 'Virtual size', value: '536.9 MB (536,870,912\nbytes)', verified: true },
  { name: 'Logical sector size', value: '512 B (512 bytes)' },
  { name: 'Physical sector s...', value: '4.1 KB (4,096 bytes)' },
  { name: 'Block size', value: '33.6 MB (33,554,432 bytes)' },
];

const fileFields: Field[] = [{ name: 'Primary', value: '507.5 MB (507,510,784 bytes)' }];

const identifierFields: Field[] = [
  { name: 'Signature', value: 'vhdxfile', verified: true, go: true },
  { name: 'Creator', value: 'Microsoft Windows 10.0.', go: true },
];

function Fields({ items, nested }: { items: Field[]; nested?: boolean }) {
  return (
    <dl className={clsx(nested ? 'pl-[25px]' : 'pl-2.5')}>
      {items.map((item) => (
        <div key={item.name} className="flex min-h-[38px] pt-0.5 pb-0.5 leading-[22px]">
          <dt className={clsx('shrink-0 whitespace-nowrap text-[#a0a0a6]', nested ? 'w-[142px]' : 'w-[147px]')}>
            {item.name}
          </dt>
          <dd className="flex flex-1 whitespace-pre text-[#f0f0f2]">
            {item.verified && (
              <Svg box={16} width={1.8} className="mt-[3px] mr-[5px] ml-0.5 h-4 w-4 text-[#1b6099]">
                <path d="M2.500 9l3 4.500L12 3" />
              </Svg>
            )}
            {item.value}
          </dd>
          {item.go && (
            <button type="button" className={clsx('-mt-0.5 mr-3.5 h-[26px] w-[39px] text-[14px]', button)}>
              Go
            </button>
          )}
        </div>
      ))}
    </dl>
  );
}

function Group({ title, collapsed }: { title: string; collapsed?: boolean }) {
  return (
    <button
      type="button"
      className={clsx('flex h-8 w-full items-center gap-[11px] pl-2.5 text-white', !collapsed && 'font-semibold')}
    >
      <span className="text-[#9a9aa0]">{collapsed ? <ChevronRight /> : <ChevronDown />}</span>
      {title}
    </button>
  );
}

function Inspector() {
  return (
    <aside className="flex w-[427px] shrink-0 flex-col overflow-hidden border border-[#3f3f44]">
      <PanelHeader title="Inspector" />
      <div className="flex h-[53px] shrink-0 items-center border-b border-[#3d3c42] pr-2.5 pl-2.5">
        <ArrowBarIcon />
        <h3 className="ml-1.5 flex-1 font-semibold text-white">workstation-disk.vhdx</h3>
        <button
          type="button"
          className="h-[33px] w-[57px] rounded-2xl border border-[#5aa7f5] bg-[#26384b] pb-2 text-[13px] text-[#e8e8ea]"
        >
          Node
        </button>
        <button
          type="button"
          aria-label="Copy"
          className={clsx('ml-[7px] flex h-[33px] w-9 items-center justify-center', button)}
        >
          <Svg box={16} width={1.2} className="h-4 w-4">
            <rect x="6" y="1" width="9" height="11" rx="2.500" />
            <path d="M3.500 4.200A2.500 2.500 0 0 0 1.500 6.500V12a3 3 0 0 0 3 3H8a2.500 2.500 0 0 0 2.300-1.500" />
          </Svg>
        </button>
      </div>
      <input
        aria-label="Filter fields"
        placeholder="Filter fields"
        className="mx-2.5 mt-2 h-[33px] shrink-0 rounded border border-[#3d3c42] bg-[#2b2a30] px-2.5 pb-[3px] outline-none placeholder:text-[#96969c]"
      />
      <div className="flex min-h-0 flex-1">
        <div className="min-w-0 flex-1 overflow-hidden pt-1.5">
          <Group title="Properties" />
          <div className="pt-1.5">
            <Fields items={properties} />
          </div>
          <Group title="Raw" collapsed />
          <div className="mt-[11px] mb-1 border-b border-[#3d3c42]" />
          <Group title="Metadata — VHDX image (dynamic)" />
          <div className="pt-[5px] pb-[3px]">
            <Group title="Image" />
            <div className="pt-1">
              <Fields items={imageFields} nested />
            </div>
          </div>
          <div className="pb-[3px]">
            <Group title="Files" />
            <div className="pt-1">
              <Fields items={fileFields} nested />
            </div>
          </div>
          <Group title="File identifier" />
          <div className="pt-1">
            <Fields items={identifierFields} nested />
          </div>
        </div>
        <div className="mr-0.5 w-[7px] shrink-0 pt-[5px]">
          <div className="h-[310px] rounded-full bg-[#5e5d63]" />
        </div>
      </div>
    </aside>
  );
}

function StatusBar() {
  return (
    <footer className="mt-2 flex h-[29px] shrink-0 items-center bg-[#1f4e79] px-2.5 text-white">
      <span>Case saved 9:44 PM</span>
      <span className="ml-[18px]">4 evidence</span>
      <span className="ml-[18px]">WAL ok</span>
      <span className="ml-auto">Reading: Source</span>
      <span className="ml-[15px]">–</span>
      <span className="ml-[54px]">512 B/sector</span>
    </footer>
  );
}

export default function App() {
  return (
    <div className="flex h-screen flex-col overflow-hidden bg-[#1f1e23] font-['Noto_Sans',sans-serif] text-[15px] leading-5 text-[#f0f0f2]">
      <TitleBar />
      <Ribbon />
      <main className="mt-2.5 flex min-h-0 flex-1 gap-[9px] px-2">
        <Navigator />
        <div className="flex min-w-0 flex-1 flex-col">
          <Editor />
          <TaskCenter />
        </div>
        <Inspector />
      </main>
      <StatusBar />
    </div>
  );
}
